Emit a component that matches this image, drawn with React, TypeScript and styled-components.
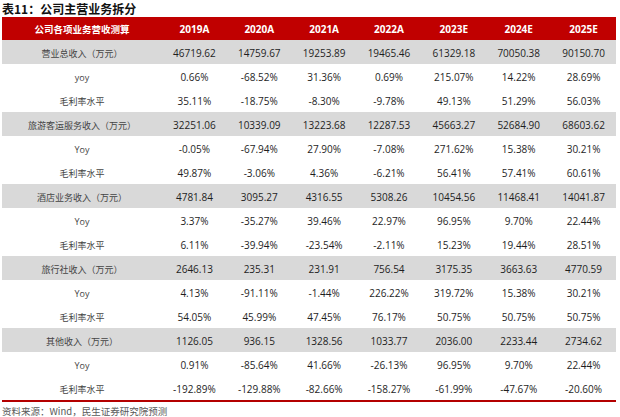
import React from "react";
import styled, { createGlobalStyle } from "styled-components";

const GlobalStyle = createGlobalStyle`
  html, body {
    margin: 0;
    padding: 0;
    background: #ffffff;
  }
  body {
    font-family: "Open Sans", "Noto Sans CJK SC", sans-serif;
  }
`;

type Row = {
  label: string;
  values: string[];
  main?: boolean;
};

const years = ["2019A", "2020A", "2021A", "2022A", "2023E", "2024E", "2025E"];

const rows: Row[] = [
  { label: "营业总收入（万元）", main: true, values: ["46719.62", "14759.67", "19253.89", "19465.46", "61329.18", "70050.38", "90150.70"] },
  { label: "yoy", values: ["0.66%", "-68.52%", "31.36%", "0.69%", "215.07%", "14.22%", "28.69%"] },
  { label: "毛利率水平", values: ["35.11%", "-18.75%", "-8.30%", "-9.78%", "49.13%", "51.29%", "56.03%"] },
  { label: "旅游客运服务收入（万元）", main: true, values: ["32251.06", "10339.09", "13223.68", "12287.53", "45663.27", "52684.90", "68603.62"] },
  { label: "Yoy", values: ["-0.05%", "-67.94%", "27.90%", "-7.08%", "271.62%", "15.38%", "30.21%"] },
  { label: "毛利率水平", values: ["49.87%", "-3.06%", "4.36%", "-6.21%", "56.41%", "57.41%", "60.61%"] },
  { label: "酒店业务收入（万元）", main: true, values: ["4781.84", "3095.27", "4316.55", "5308.26", "10454.56", "11468.41", "14041.87"] },
  { label: "Yoy", values: ["3.37%", "-35.27%", "39.46%", "22.97%", "96.95%", "9.70%", "22.44%"] },
  { label: "毛利率水平", values: ["6.11%", "-39.94%", "-23.54%", "-2.11%", "15.23%", "19.44%", "28.51%"] },
  { label: "旅行社收入（万元）", main: true, values: ["2646.13", "235.31", "231.91", "756.54", "3175.35", "3663.63", "4770.59"] },
  { label: "Yoy", values: ["4.13%", "-91.11%", "-1.44%", "226.22%", "319.72%", "15.38%", "30.21%"] },
  { label: "毛利率水平", values: ["54.05%", "45.99%", "47.45%", "76.17%", "50.75%", "50.75%", "50.75%"] },
  { label: "其他收入（万元）", main: true, values: ["1126.05", "936.15", "1328.56", "1033.77", "2036.00", "2233.44", "2734.62"] },
  { label: "Yoy", values: ["0.91%", "-85.64%", "41.66%", "-26.13%", "96.95%", "9.70%", "22.44%"] },
  { label: "毛利率水平", values: ["-192.89%", "-129.88%", "-82.66%", "-158.27%", "-61.99%", "-47.67%", "-20.60%"] },
];

const Page = styled.div`
  width: 620px;
  height: 417px;
  padding: 0 4px 0 2px;
  box-sizing: border-box;
  overflow: hidden;
`;

const Title = styled.div`
  font-family: "Noto Sans CJK SC", sans-serif;
  font-weight: 700;
  font-size: 12px;
  line-height: 17px;
  color: #111;
`;

const Table = styled.div`
  width: 614px;
  border-bottom: 2px solid #b40000;
`;

const Line = styled.div<{ $head?: boolean; $shade?: boolean }>`
  display: grid;
  grid-template-columns: 160px repeat(7, 1fr);
  align-items: center;
  height: ${(p) => (p.$head ? "23px" : "24px")};
  background: ${(p) => (p.$head ? "#c00000" : p.$shade ? "#d9d9d9" : "#ffffff")};
`;

const HeadCell = styled.div<{ $cjk?: boolean }>`
  text-align: center;
  color: #ffffff;
  font-weight: 700;
  font-family: ${(p) => (p.$cjk ? `"Noto Sans CJK SC", sans-serif` : `"Open Sans", sans-serif`)};
  font-size: ${(p) => (p.$cjk ? "9.5px" : "10px")};
  padding-top: 1px;
`;

const Label = styled.div`
  text-align: center;
  font-family: "Open Sans", "Noto Sans CJK SC", sans-serif;
  font-size: 9px;
  color: #444;
  padding-top: 2px;
`;

const Value = styled.div`
  text-align: center;
  font-family: "Open Sans", sans-serif;
  font-size: 10px;
  color: #1e1e1e;
  padding-top: 2px;
`;

const Source = styled.div`
  margin-top: 3px;
  font-family: "Noto Sans CJK SC", sans-serif;
  font-size: 9.5px;
  line-height: 12px;
  color: #595959;
`;

export default function App() {
  return (
    <Page>
      <GlobalStyle />
      <Title>表11：公司主营业务拆分</Title>
      <Table>
        <Line $head>
          <HeadCell $cjk>公司各项业务营收测算</HeadCell>
          {years.map((y) => (
            <HeadCell key={y}>{y}</HeadCell>
          ))}
        </Line>
        {rows.map((r, i) => (
          <Line key={i} $shade={r.main}>
            <Label>{r.label}</Label>
            {r.values.map((v, j) => (
              <Value key={j}>{v}</Value>
            ))}
          </Line>
        ))}
      </Table>
      <Source>资料来源：Wind，民生证券研究院预测</Source>
    </Page>
  );
}
